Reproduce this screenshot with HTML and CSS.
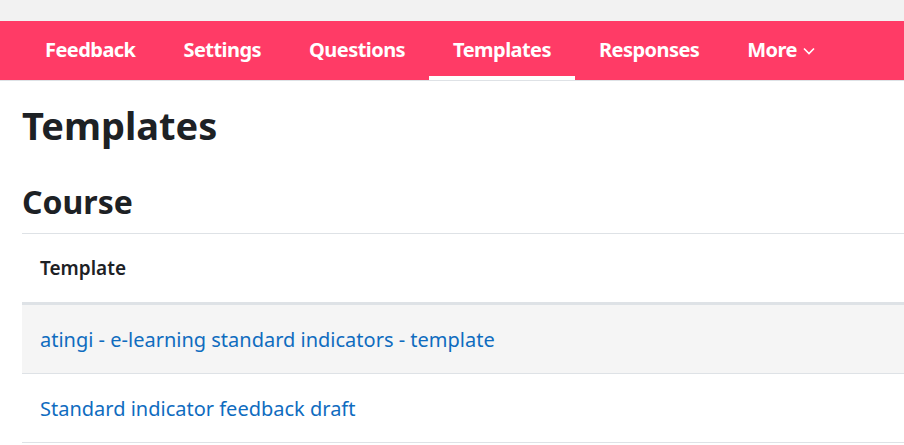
FILE: index.html
```html
<!DOCTYPE html>
<html lang="en">
<head>
    <meta charset="UTF-8">
    <meta name="viewport" content="width=device-width, initial-scale=1.0">
    <title>Templates</title>
    <link rel="stylesheet" href="styles.css">
</head>
<body>
    <div class="topbar"></div>

    <!-- Secondary navigation -->
    <nav class="secondary-nav">
        <a href="#" class="nav-item">Feedback</a>
        <a href="#" class="nav-item">Settings</a>
        <a href="#" class="nav-item">Questions</a>
        <a href="#" class="nav-item active">Templates</a>
        <a href="#" class="nav-item">Responses</a>
        <a href="#" class="nav-item">More
            <svg class="chevron" width="12" height="8" viewBox="0 0 12 8"><path d="M1 1.5 L6 6.5 L11 1.5" fill="none" stroke="#fff" stroke-width="1.6"/></svg>
        </a>
    </nav>

    <div class="page">
        <h2>Templates</h2>
        <h3>Course</h3>

        <table class="templates">
            <thead>
                <tr><th>Template</th></tr>
            </thead>
            <tbody>
                <tr class="odd"><td><a href="#">atingi - e-learning standard indicators - template</a></td></tr>
                <tr><td><a href="#">Standard indicator feedback draft</a></td></tr>
            </tbody>
        </table>
    </div>
</body>
</html>
```

FILE: styles.css
```css
body {
    font-family: "Noto Sans", Arial, sans-serif;
    margin: 0;
    padding: 0;
    background-color: #fff;
    color: #1d2125;
}
.topbar {
    height: 21px;
    background: #f2f2f2;
}
.secondary-nav {
    display: flex;
    height: 59px;
    padding-left: 21px;
    background: #ff3b66;
    border-bottom: 1px solid #dee2e6;
}
.nav-item {
    display: flex;
    align-items: center;
    gap: 6px;
    padding: 2px 24px 0;
    color: #fff;
    font-size: 20px;
    font-weight: 700;
    text-decoration: none;
    letter-spacing: -0.55px;
    border-bottom: 4px solid transparent;
}
.nav-item.active {
    border-bottom-color: #fff;
}
.chevron {
    margin-top: 2px;
}
.page {
    padding: 0 0 0 22px;
}
h2 {
    margin: 0;
    padding-top: 20px;
    font-size: 38px;
    line-height: 48px;
    font-weight: 700;
}
h3 {
    margin: 0;
    padding-top: 31px;
    font-size: 32px;
    line-height: 44px;
    font-weight: 700;
    height: 53px;
}
.templates {
    width: 100%;
    border-collapse: collapse;
}
.templates th {
    text-align: left;
    font-size: 19px;
    font-weight: 600;
    padding: 0 18px;
    height: 68px;
    border-top: 1px solid #dee2e6;
    border-bottom: 3px solid #dee2e6;
}
.templates td {
    padding: 1px 18px 0;
    height: 67px;
    font-size: 20px;
    border-bottom: 1px solid #dee2e6;
}
.templates tr.odd td {
    background: #f5f5f5;
}
.templates a {
    color: #0f6cbf;
    text-decoration: none;
}
```
